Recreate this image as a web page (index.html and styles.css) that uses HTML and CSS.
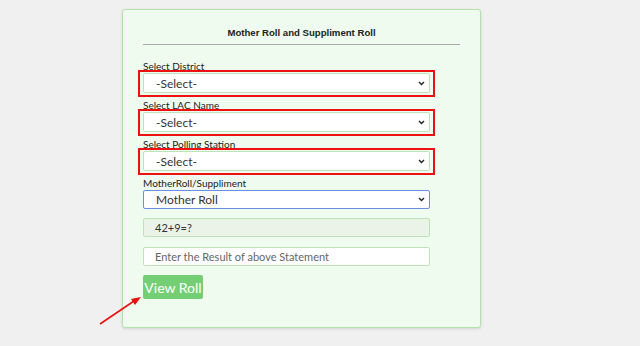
FILE: index.html
```html
<!DOCTYPE html>
<html lang="en">
<head>
    <meta charset="UTF-8">
    <meta name="viewport" content="width=device-width, initial-scale=1.0">
    <title>Mother Roll and Suppliment Roll</title>
    <link rel="stylesheet" href="styles.css">
</head>
<body>
    <div class="card">
        <h3 class="card-title">Mother Roll and Suppliment Roll</h3>
        <hr>
        <form id="roll-form">
            <div class="form-group">
                <label for="district">Select District</label>
                <div class="marked">
                    <select id="district"><option>-Select-</option></select>
                </div>
            </div>
            <div class="form-group">
                <label for="lac">Select LAC Name</label>
                <div class="marked">
                    <select id="lac"><option>-Select-</option></select>
                </div>
            </div>
            <div class="form-group">
                <label for="station">Select Polling Station</label>
                <div class="marked">
                    <select id="station"><option>-Select-</option></select>
                </div>
            </div>
            <div class="form-group">
                <label for="roll-type">MotherRoll/Suppliment</label>
                <select id="roll-type" class="focused">
                    <option>Mother Roll</option>
                    <option>Suppliment Roll</option>
                </select>
            </div>
            <div class="captcha">42+9=?</div>
            <input type="text" class="result" placeholder="Enter the Result of above Statement">
            <button type="submit">View Roll</button>
        </form>
    </div>

    <svg class="pointer" width="60" height="40" viewBox="0 0 60 40">
        <line x1="10" y1="34" x2="47" y2="9" stroke="#e81010" stroke-width="1.6"/>
        <polygon points="51,7 41,9 45,15" fill="#e81010"/>
    </svg>
</body>
</html>
```

FILE: styles.css
```css
body {
    margin: 0;
    padding: 9px 0 0 122px;
    background-color: #f0f0f0;
    font-family: "Lato", "Open Sans", sans-serif;
    color: #333;
    height: 337px;
    overflow: hidden;
}
.card {
    width: 317px;
    padding: 0 20px 28px 20px;
    background-color: #effbee;
    border: 1px solid #b3e2ad;
    border-radius: 3px;
    box-shadow: 0 1px 3px rgba(0, 0, 0, 0.12);
}
.card-title {
    margin: 16px 0 0;
    font-family: "Liberation Sans", Arial, sans-serif;
    font-size: 9.6px;
    line-height: 14px;
    font-weight: bold;
    text-align: center;
    color: #222;
}
hr {
    margin: 4px 0 14px;
    border: none;
    border-top: 1px solid #a9a9a9;
}
form {
    width: 287px;
}
.form-group {
    margin-bottom: 5px;
}
.form-group label {
    display: block;
    font-size: 10px;
    line-height: 14px;
    color: #222;
}
.marked {
    position: relative;
}
.marked::after {
    content: "";
    position: absolute;
    top: -3px;
    bottom: -4px;
    left: -5px;
    right: -5px;
    border: 2px solid #ee1111;
    pointer-events: none;
}
select {
    display: block;
    width: 100%;
    height: 20px;
    padding: 0 0 0 12px;
    border: 1px solid #bfe3b8;
    border-radius: 2px;
    background-color: #fff;
    background-image: url("data:image/svg+xml,%3Csvg xmlns='http://www.w3.org/2000/svg' width='7' height='5'%3E%3Cpath d='M1 1l2.5 2.5L6 1' fill='none' stroke='%23222' stroke-width='1.4'/%3E%3C/svg%3E");
    background-repeat: no-repeat;
    background-position: right 4px center;
    appearance: none;
    -webkit-appearance: none;
    font-family: inherit;
    font-size: 12px;
    color: #333;
}
select.focused {
    height: 19px;
    border: 1px solid #6b8fe0;
    margin-bottom: 9px;
}
.captcha {
    height: 17px;
    line-height: 17px;
    padding-left: 11px;
    margin-bottom: 10px;
    background-color: #ebf3e8;
    border: 1px solid #bfe3b8;
    border-radius: 2px;
    font-size: 11px;
}
.result {
    display: block;
    box-sizing: border-box;
    width: 100%;
    height: 19px;
    padding: 0 0 0 11px;
    margin-bottom: 9px;
    border: 1px solid #bfe3b8;
    border-radius: 2px;
    background-color: #fff;
    font-family: inherit;
    font-size: 11px;
}
.result::placeholder {
    color: #666;
}
button {
    display: block;
    width: 60px;
    height: 24px;
    padding: 0;
    background-color: #74cf74;
    color: #fff;
    border: none;
    border-radius: 2px;
    font-family: inherit;
    font-size: 14px;
    cursor: pointer;
}
.pointer {
    position: absolute;
    left: 90px;
    top: 290px;
}
```
